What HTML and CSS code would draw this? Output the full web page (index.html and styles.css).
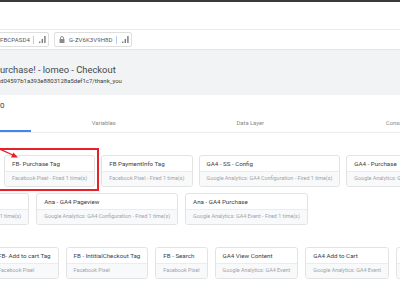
FILE: index.html
```html
<!DOCTYPE html>
<html>
<head>
<meta charset="utf-8">
<link rel="stylesheet" href="styles.css">
</head>
<body>
<div class="page">
  <div class="topbar"></div>
  <div class="header"></div>
  <div class="chips">
    <div class="chip chip-first">
      <span class="chip-id">FBCPASD4</span>
      <span class="sep"></span>
      <svg class="signal" viewBox="0 0 7 7" width="7" height="7"><rect x="0" y="5.5" width="1.4" height="1.5"/><rect x="2.6" y="3" width="1.4" height="4"/><rect x="5.2" y="0" width="1.4" height="7"/></svg>
    </div>
    <div class="chip">
      <svg class="lock" viewBox="0 0 6 7" width="6" height="7"><path d="M1.5 3V2a1.5 1.5 0 0 1 3 0v1" fill="none" stroke="#8a8a8a" stroke-width="0.9"/><rect x="0.5" y="3" width="5" height="4" rx="0.6" fill="#8a8a8a"/></svg>
      <span class="chip-id">G-ZV6K3V9H8D</span>
      <span class="sep"></span>
      <svg class="signal" viewBox="0 0 7 7" width="7" height="7"><rect x="0" y="5.5" width="1.4" height="1.5"/><rect x="2.6" y="3" width="1.4" height="4"/><rect x="5.2" y="0" width="1.4" height="7"/></svg>
    </div>
  </div>
  <div class="summary">
    <div class="title">Purchase! - lomeo - Checkout</div>
    <div class="url">d04597b1a393e8803128a5def1c7/thank_you</div>
  </div>
  <div class="count">0</div>
  <div class="tabs">
    <div class="tab active">Tags</div>
    <div class="tab">Variables</div>
    <div class="tab">Data Layer</div>
    <div class="tab">Consent</div>
  </div>
  <div class="cards">
    <div class="row row1">
      <div class="card"><div class="card-title">FB- Purchase Tag</div><div class="card-sub">Facebook Pixel - Fired 1 time(s)</div></div>
      <div class="card"><div class="card-title">FB PaymentInfo Tag</div><div class="card-sub">Facebook Pixel - Fired 1 time(s)</div></div>
      <div class="card"><div class="card-title">GA4 - SS - Config</div><div class="card-sub">Google Analytics: GA4 Configuration - Fired 1 time(s)</div></div>
      <div class="card"><div class="card-title">GA4 - Purchase</div><div class="card-sub">Google Analytics: GA4 Event - Fired 1 time(s)</div></div>
    </div>
    <div class="row row2">
      <div class="card"><div class="card-title">FB - PageView</div><div class="card-sub">Facebook Pixel - Fired 1 time(s)</div></div>
      <div class="card"><div class="card-title">Ana - GA4 Pageview</div><div class="card-sub">Google Analytics: GA4 Configuration - Fired 1 time(s)</div></div>
      <div class="card"><div class="card-title">Ana - GA4 Purchase</div><div class="card-sub">Google Analytics: GA4 Event - Fired 1 time(s)</div></div>
    </div>
    <div class="row row3">
      <div class="card"><div class="card-title">FB- Add to cart Tag</div><div class="card-sub">Facebook Pixel</div></div>
      <div class="card"><div class="card-title">FB - IntitialCheckout Tag</div><div class="card-sub">Facebook Pixel</div></div>
      <div class="card"><div class="card-title">FB - Search</div><div class="card-sub">Facebook Pixel</div></div>
      <div class="card"><div class="card-title">GA4 View Content</div><div class="card-sub">Google Analytics: GA4 Event</div></div>
      <div class="card"><div class="card-title">GA4 Add to Cart</div><div class="card-sub">Google Analytics: GA4 Event</div></div>
      <div class="card"><div class="card-title">GA4 Begin Checkout</div><div class="card-sub">Google Analytics: GA4 Event</div></div>
    </div>
  </div>
  <svg class="annot" width="400" height="284" viewBox="0 0 400 284">
    <rect x="-4" y="149" width="102" height="41" fill="none" stroke="#e8202a" stroke-width="2"/>
    <line x1="-12" y1="144" x2="14" y2="155.5" stroke="#e8202a" stroke-width="1.3"/>
    <polygon points="18,157.5 11,157.6 13.4,152.6" fill="#e8202a"/>
  </svg>
</div>
</body>
</html>
```
FILE: styles.css
```css
* { box-sizing: border-box; }
html, body { margin: 0; padding: 0; }
body {
  width: 400px;
  height: 284px;
  overflow: hidden;
  background: #fff;
  font-family: Roboto, "Liberation Sans", sans-serif;
}
.page {
  position: relative;
  width: 400px;
  height: 284px;
  overflow: hidden;
}
.topbar { height: 2px; background: #3a3a3a; }
.header { height: 28px; border-bottom: 1px solid #ebebeb; }
.chips {
  height: 19px;
  display: flex;
  align-items: center;
  gap: 5px;
}
.chip {
  height: 15px;
  display: flex;
  align-items: center;
  border: 1px solid #dedede;
  border-radius: 2px;
  padding: 0 2px 0 4px;
}
.chip-first { margin-left: -6px; padding-left: 5px; }
.chip-id {
  font-size: 6px;
  color: #555;
  letter-spacing: 0.1px;
  white-space: nowrap;
}
.lock { margin-right: 4px; }
.sep {
  width: 1px;
  height: 8px;
  background: #b7cdf3;
  margin: 0 5px 0 3px;
}
.signal { fill: #7a7a7a; }
.summary {
  height: 46px;
  background: #f1f3f4;
  border-top: 1px solid #e6e6e6;
  padding-top: 14px;
}
.title {
  font-size: 9.4px;
  line-height: 12px;
  color: #45494d;
  margin-left: -6px;
  white-space: nowrap;
}
.url {
  font-size: 6px;
  line-height: 10px;
  color: #3c4043;
  white-space: nowrap;
}
.count {
  height: 18px;
  padding-top: 7px;
  font-size: 8px;
  line-height: 8px;
  color: #444;
}
.tabs {
  display: flex;
  margin-left: -116px;
  border-bottom: 1px solid #ececec;
}
.tab {
  flex: 0 0 146.5px;
  text-align: center;
  font-size: 5.8px;
  line-height: 8px;
  padding: 6px 0 3px;
  color: #888;
  border-bottom: 2px solid transparent;
}
.tab.active { border-bottom-color: #4285f4; color: #1a73e8; }
.cards { padding-top: 22px; }
.row {
  display: flex;
  gap: 6px;
  white-space: nowrap;
}
.row1 { margin-left: 4px; }
.row2 { margin-left: -62px; margin-top: 6px; gap: 7px; }
.row3 { margin-left: -10px; margin-top: 22px; gap: 7px; }
.card {
  flex: 0 0 auto;
  min-width: 52px;
  border: 1px solid #e3e3e3;
  border-radius: 3px;
  overflow: hidden;
  background: #fff;
}
.card-title {
  height: 16px;
  line-height: 16px;
  padding: 0 7px;
  font-size: 6.2px;
  color: #3c4043;
  border-bottom: 1px solid #ececec;
}
.card-sub {
  height: 14px;
  line-height: 13px;
  padding: 0 7px;
  font-size: 5.4px;
  color: #a0a4a8;
  background: #f8f9fa;
}
.annot {
  position: absolute;
  left: 0;
  top: 0;
  pointer-events: none;
}
```
